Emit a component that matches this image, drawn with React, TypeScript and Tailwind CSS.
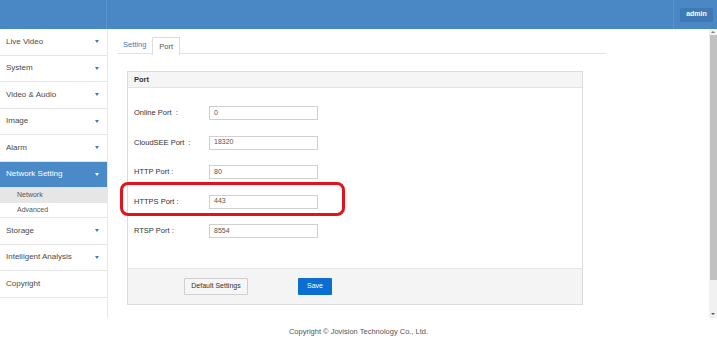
import React from "react";

const menu = [
  { label: "Live Video", arrow: true },
  { label: "System", arrow: true },
  { label: "Video & Audio", arrow: true },
  { label: "Image", arrow: true },
  { label: "Alarm", arrow: true },
  { label: "Network Setting", arrow: true, active: true },
  { label: "Storage", arrow: true },
  { label: "Intelligent Analysis", arrow: true },
  { label: "Copyright", arrow: false },
];

const ports = [
  { label: "Online Port  :", value: "0" },
  { label: "CloudSEE Port  :", value: "18320" },
  { label: "HTTP Port :", value: "80" },
  { label: "HTTPS Port :", value: "443" },
  { label: "RTSP Port :", value: "8554" },
];

function Caret({ white }: { white?: boolean }) {
  return (
    <span
      className={`w-0 h-0 border-x-[2.5px] border-x-transparent border-t-[3px] ${
        white ? "border-t-white" : "border-t-[#3b7dc0]"
      }`}
    />
  );
}

export default function App() {
  return (
    <div className="w-[717px] h-[346px] bg-white flex flex-col font-['Liberation_Sans',Arial,sans-serif] overflow-hidden">
      {/* Top bar */}
      <header className="h-[29px] shrink-0 bg-[#4a88c5] flex">
        <div className="w-[107px] border-r border-[#5a94cc]" />
        <div className="flex-1" />
        <div className="w-[44px] border-l border-[#5a94cc] flex items-center justify-center pl-[2px]">
          <span className="bg-[#3f7ab5] text-white font-bold text-[7px] px-[6px] h-[14px] flex items-center rounded-[1px]">
            admin
          </span>
        </div>
      </header>

      <div className="flex h-[289px] shrink-0">
        {/* Sidebar */}
        <aside className="w-[108px] shrink-0 border-r border-[#e8e8e8] flex flex-col">
          {menu.map((m) => (
            <React.Fragment key={m.label}>
              <div
                className={`h-[26.5px] shrink-0 flex items-center justify-between pl-[6px] pr-[8px] text-[8px] border-b border-[#e5e5e5] ${
                  m.active ? "bg-[#4a8ac9] text-white" : "text-[#4a4a4a]"
                }`}
              >
                <span>{m.label}</span>
                {m.arrow && <Caret white={m.active} />}
              </div>
              {m.active && (
                <>
                  <div className="h-[15px] shrink-0 flex items-center pl-[17px] text-[7px] text-[#555] bg-[#e6e6e6]">
                    Network
                  </div>
                  <div className="h-[15px] shrink-0 flex items-center pl-[17px] text-[7px] text-[#555] border-b border-[#e5e5e5]">
                    Advanced
                  </div>
                </>
              )}
            </React.Fragment>
          ))}
        </aside>

        {/* Main */}
        <main className="flex-1 relative pt-[8px] pl-[9px]">
          <div className="w-[489px] flex border-b border-[#e3e3e3] h-[17px]">
            <div className="px-[6px] flex items-center text-[7.5px] text-[#3b7dc0]">Setting</div>
            <div className="px-[6px] flex items-center text-[7.5px] text-[#555] border border-b-0 border-[#dcdcdc] bg-white h-[18px] -mb-px">
              Port
            </div>
          </div>

          <section className="ml-[10px] mt-[17px] w-[456px] border border-[#dcdcdc] flex flex-col">
            <div className="h-[16px] bg-[#f5f5f5] border-b border-[#e3e3e3] flex items-center pl-[6px] text-[7.5px] font-bold text-[#333]">
              Port
            </div>
            <div className="flex flex-col gap-[15.5px] pt-[18px] pb-[30px]">
              {ports.map((p) => (
                <div key={p.label} className="flex items-center h-[14px]">
                  <span className="w-[81px] pl-[6px] text-[7.5px] text-[#333] whitespace-pre">{p.label}</span>
                  <div className="w-[109px] h-[14px] border border-[#d0d0d0] bg-white flex items-center pl-[4px] text-[7px] text-[#555]">
                    {p.value}
                  </div>
                </div>
              ))}
            </div>
            <div className="h-[36px] bg-[#f4f4f4] border-t border-[#e6e6e6] flex items-center pl-[56px]">
              <button className="w-[64px] h-[17px] bg-[#f6f6f6] border border-[#cfcfcf] text-[7px] text-[#333] rounded-[1px]">
                Default Settings
              </button>
              <button className="ml-[50px] w-[34px] h-[17px] bg-[#0a6fd1] text-white text-[7px] rounded-[1px]">
                Save
              </button>
            </div>
          </section>

          {/* highlight */}
          <div className="absolute left-[12px] top-[153px] w-[225px] h-[34px] border-[3px] border-[#e3131b] rounded-[8px]" />
        </main>

        {/* Scrollbar */}
        <div className="w-[8px] shrink-0 bg-[#f1f1f1] flex flex-col items-center">
          <div className="h-[6px] flex items-center">
            <span className="w-0 h-0 border-x-[2px] border-x-transparent border-b-[2px] border-b-[#7a7a7a]" />
          </div>
          <div className="w-[7px] h-[245px] bg-[#c1c1c1]" />
          <div className="flex-1" />
          <div className="h-[8px] flex items-center">
            <span className="w-0 h-0 border-x-[2px] border-x-transparent border-t-[2px] border-t-[#555]" />
          </div>
        </div>
      </div>

      <footer className="flex-1 flex items-center justify-center text-[7.5px] text-[#555]">
        Copyright © Jovision Technology Co., Ltd.
      </footer>
    </div>
  );
}
